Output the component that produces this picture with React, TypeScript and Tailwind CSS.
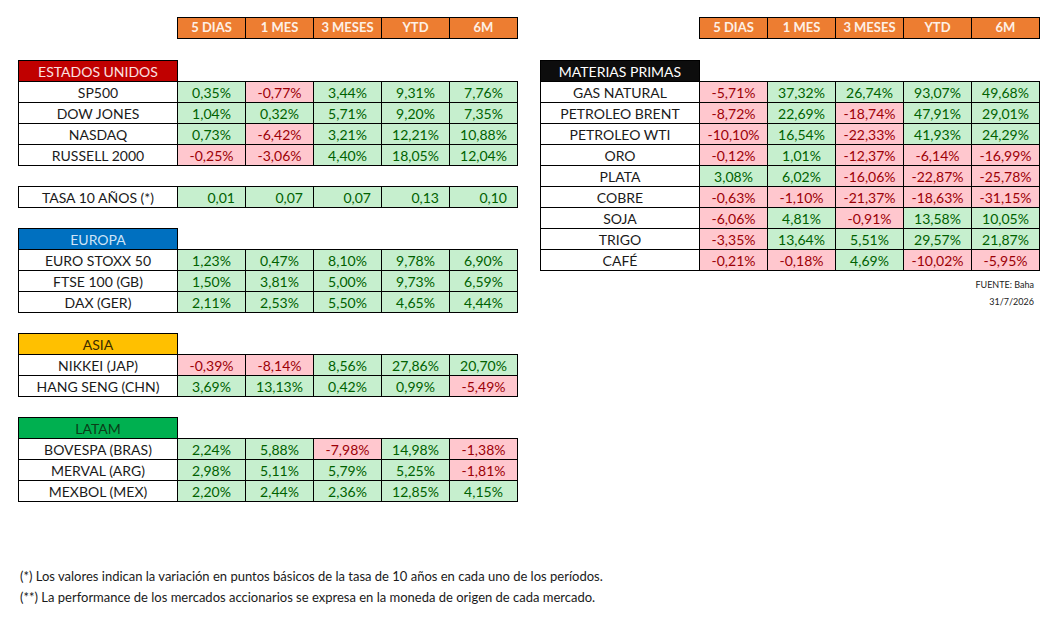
const periods = ['5 DIAS', '1 MES', '3 MESES', 'YTD', '6M']

type Row = { name: string; values: string[] }
type Section = { title: string; titleClass: string; rows: Row[]; plain?: boolean }

const leftSections: Section[] = [
  {
    title: 'ESTADOS UNIDOS',
    titleClass: 'bg-[#c00000] text-[#fbe0e0]',
    rows: [
      { name: 'SP500', values: ['0,35%', '-0,77%', '3,44%', '9,31%', '7,76%'] },
      { name: 'DOW JONES', values: ['1,04%', '0,32%', '5,71%', '9,20%', '7,35%'] },
      { name: 'NASDAQ', values: ['0,73%', '-6,42%', '3,21%', '12,21%', '10,88%'] },
      { name: 'RUSSELL 2000', values: ['-0,25%', '-3,06%', '4,40%', '18,05%', '12,04%'] },
    ],
  },
  {
    title: '',
    titleClass: '',
    plain: true,
    rows: [{ name: 'TASA 10 AÑOS (*)', values: ['0,01', '0,07', '0,07', '0,13', '0,10'] }],
  },
  {
    title: 'EUROPA',
    titleClass: 'bg-[#0070c0] text-[#cfe4f7]',
    rows: [
      { name: 'EURO STOXX 50', values: ['1,23%', '0,47%', '8,10%', '9,78%', '6,90%'] },
      { name: 'FTSE 100 (GB)', values: ['1,50%', '3,81%', '5,00%', '9,73%', '6,59%'] },
      { name: 'DAX (GER)', values: ['2,11%', '2,53%', '5,50%', '4,65%', '4,44%'] },
    ],
  },
  {
    title: 'ASIA',
    titleClass: 'bg-[#ffc000] text-[#3b2c00]',
    rows: [
      { name: 'NIKKEI (JAP)', values: ['-0,39%', '-8,14%', '8,56%', '27,86%', '20,70%'] },
      { name: 'HANG SENG (CHN)', values: ['3,69%', '13,13%', '0,42%', '0,99%', '-5,49%'] },
    ],
  },
  {
    title: 'LATAM',
    titleClass: 'bg-[#00b050] text-[#0b3d17]',
    rows: [
      { name: 'BOVESPA (BRAS)', values: ['2,24%', '5,88%', '-7,98%', '14,98%', '-1,38%'] },
      { name: 'MERVAL (ARG)', values: ['2,98%', '5,11%', '5,79%', '5,25%', '-1,81%'] },
      { name: 'MEXBOL (MEX)', values: ['2,20%', '2,44%', '2,36%', '12,85%', '4,15%'] },
    ],
  },
]

const commodities: Section = {
  title: 'MATERIAS PRIMAS',
  titleClass: 'bg-[#0d0d0d] text-white',
  rows: [
    { name: 'GAS NATURAL', values: ['-5,71%', '37,32%', '26,74%', '93,07%', '49,68%'] },
    { name: 'PETROLEO BRENT', values: ['-8,72%', '22,69%', '-18,74%', '47,91%', '29,01%'] },
    { name: 'PETROLEO WTI', values: ['-10,10%', '16,54%', '-22,33%', '41,93%', '24,29%'] },
    { name: 'ORO', values: ['-0,12%', '1,01%', '-12,37%', '-6,14%', '-16,99%'] },
    { name: 'PLATA', values: ['3,08%', '6,02%', '-16,06%', '-22,87%', '-25,78%'] },
    { name: 'COBRE', values: ['-0,63%', '-1,10%', '-21,37%', '-18,63%', '-31,15%'] },
    { name: 'SOJA', values: ['-6,06%', '4,81%', '-0,91%', '13,58%', '10,05%'] },
    { name: 'TRIGO', values: ['-3,35%', '13,64%', '5,51%', '29,57%', '21,87%'] },
    { name: 'CAFÉ', values: ['-0,21%', '-0,18%', '4,69%', '-10,02%', '-5,95%'] },
  ],
}

function HeaderRow() {
  return (
    <div className="flex">
      <div className="w-[160px] h-[22px]" />
      {periods.map((p) => (
        <div
          key={p}
          className="-ml-px w-[69px] h-[22px] border border-black bg-[#ed7d31] text-[#fdf0e6] font-bold text-[13px] flex items-center justify-center"
        >
          {p}
        </div>
      ))}
    </div>
  )
}

function Table({ section }: { section: Section }) {
  return (
    <div className="flex flex-col">
      {!section.plain && (
        <div className="flex">
          <div
            className={`w-[160px] h-[22px] border border-black flex items-center justify-center text-[14px] ${section.titleClass}`}
          >
            {section.title}
          </div>
        </div>
      )}
      {section.rows.map((row, i) => (
        <div key={row.name} className={`flex ${!section.plain || i > 0 ? '-mt-px' : ''}`}>
          <div className="w-[160px] h-[22px] border border-black bg-white flex items-center justify-center text-[14px] text-[#1a1a1a]">
            {row.name}
          </div>
          {row.values.map((v, j) => {
            const neg = v.startsWith('-')
            return (
              <div
                key={j}
                className={`-ml-px w-[69px] h-[22px] border border-black flex items-center text-[14px] ${
                  section.plain ? 'justify-end pr-[10px]' : 'justify-center'
                } ${neg ? 'bg-[#ffc7ce] text-[#9c0006]' : 'bg-[#c6efce] text-[#006100]'}`}
              >
                {v}
              </div>
            )
          })}
        </div>
      ))}
    </div>
  )
}

export default function App() {
  return (
    <div
      className="w-[1055px] h-[623px] bg-white pl-[18px] pt-[17px] overflow-hidden"
      style={{ fontFamily: 'Lato, "Open Sans", sans-serif' }}
    >
      <div className="flex items-start">
        {/* Índices */}
        <div className="flex flex-col">
          <HeaderRow />
          <div className="flex flex-col gap-[20px] mt-[21px]">
            {leftSections.map((s, i) => (
              <Table key={i} section={s} />
            ))}
          </div>
        </div>

        {/* Materias primas */}
        <div className="flex flex-col ml-[22px]">
          <HeaderRow />
          <div className="mt-[21px]">
            <Table section={commodities} />
          </div>
          <div className="flex flex-col items-end pr-[6px] mt-[5px] text-[9px] text-[#222] leading-[17px]">
            <span>FUENTE: Baha</span>
            <span>31/7/2026</span>
          </div>
        </div>
      </div>

      <div className="mt-[64px] flex flex-col text-[13px] text-[#1a1a1a] leading-[21px] pl-[2px]">
        <p>(*) Los valores indican la variación en puntos básicos de la tasa de 10 años en cada uno de los períodos.</p>
        <p>(**) La performance de los mercados accionarios se expresa en la moneda de origen de cada mercado.</p>
      </div>
    </div>
  )
}
